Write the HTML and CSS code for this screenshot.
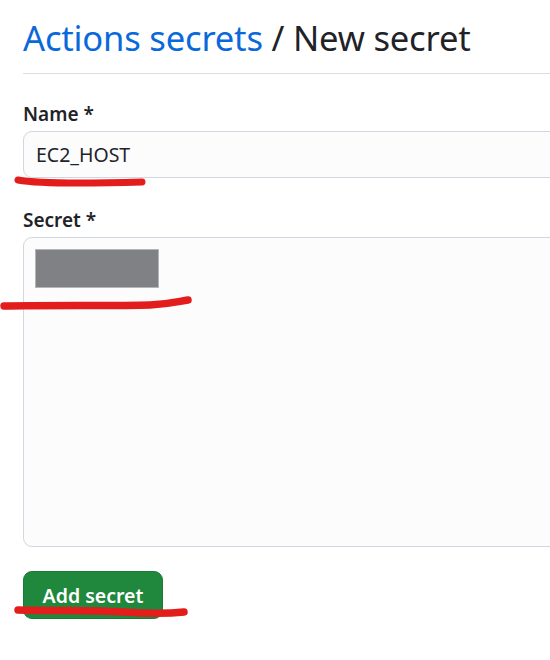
FILE: index.html
```html
<!DOCTYPE html>
<html>
<head>
<meta charset="utf-8">
<link rel="stylesheet" href="styles.css">
</head>
<body>
<div class="page">
  <div class="header">
    <h1 class="title"><a class="crumb" href="#">Actions secrets</a> / New secret</h1>
  </div>
  <form class="form">
    <div class="field field-name">
      <label class="label">Name *</label>
      <div class="input">EC2_HOST</div>
      <svg class="mark mark-name" width="132" height="12" viewBox="0 0 132 12"><path d="M4 5 C 20 8, 60 9, 128 7" stroke="#e31c1c" stroke-width="7" fill="none" stroke-linecap="round"/></svg>
    </div>
    <div class="field field-secret">
      <label class="label">Secret *</label>
      <div class="textarea"><div class="redact"></div></div>
      <svg class="mark mark-secret" width="196" height="16" viewBox="0 0 196 16"><path d="M4 11 C 40 10, 120 11, 150 10 C 170 9, 180 6, 188 5" stroke="#e31c1c" stroke-width="7.5" fill="none" stroke-linecap="round"/></svg>
    </div>
    <div class="actions">
      <button type="button" class="btn">Add secret</button>
      <svg class="mark mark-btn" width="176" height="14" viewBox="0 0 176 14"><path d="M4 6 C 40 7, 80 6, 110 8 C 140 10, 160 9, 170 8" stroke="#e31c1c" stroke-width="7.5" fill="none" stroke-linecap="round"/></svg>
    </div>
  </form>
</div>
</body>
</html>
```
FILE: styles.css
```css
* { box-sizing: border-box; }
html, body { margin: 0; padding: 0; background: #ffffff; }
body {
  font-family: "Noto Sans", "Open Sans", sans-serif;
  color: #1f2328;
  width: 550px;
  height: 660px;
  overflow: hidden;
}
.page {
  padding: 14px 0 0 23px;
  position: relative;
  width: 550px;
  height: 660px;
  overflow: hidden;
}
.header {
  border-bottom: 1px solid #d8dee4;
  padding-bottom: 11px;
}
.title {
  margin: 0;
  font-weight: 400;
  font-size: 34.6px;
  line-height: 48px;
  letter-spacing: -0.2px;
  white-space: nowrap;
}
.crumb { color: #0969da; text-decoration: none; }
.form { padding-top: 25px; }
.field { position: relative; }
.field-name { margin-bottom: 27px; }
.field-secret { margin-bottom: 24px; }
.label {
  display: block;
  font-size: 19px;
  font-weight: 600;
  line-height: 28px;
  margin-bottom: 4px;
  padding-top: 1px;
  height: 28px;
}
.input {
  width: 545px;
  height: 47px;
  border: 1px solid #d0d7de;
  border-radius: 9px;
  background: #fcfcfd;
  font-size: 19.5px;
  line-height: 45px;
  padding-left: 12px;
}
.textarea {
  width: 545px;
  height: 310px;
  border: 1px solid #d0d7de;
  border-radius: 9px;
  background: #fcfcfd;
  padding: 11px 0 0 11px;
}
.redact {
  width: 124px;
  height: 39px;
  background: #808184;
  border: 1px solid #b4b5b8;
}
.actions { position: relative; }
.btn {
  display: block;
  width: 140px;
  height: 48px;
  border: 1px solid #1c7a37;
  border-radius: 9px;
  background: #1f883d;
  color: #ffffff;
  font-family: "Noto Sans", "Open Sans", sans-serif;
  font-size: 19.5px;
  font-weight: 600;
  padding: 0;
}
.mark { position: absolute; }
.mark-name { left: -9px; top: 76px; }
.mark-secret { left: -23px; top: 90px; }
.mark-btn { left: -9px; top: 33px; }
```
